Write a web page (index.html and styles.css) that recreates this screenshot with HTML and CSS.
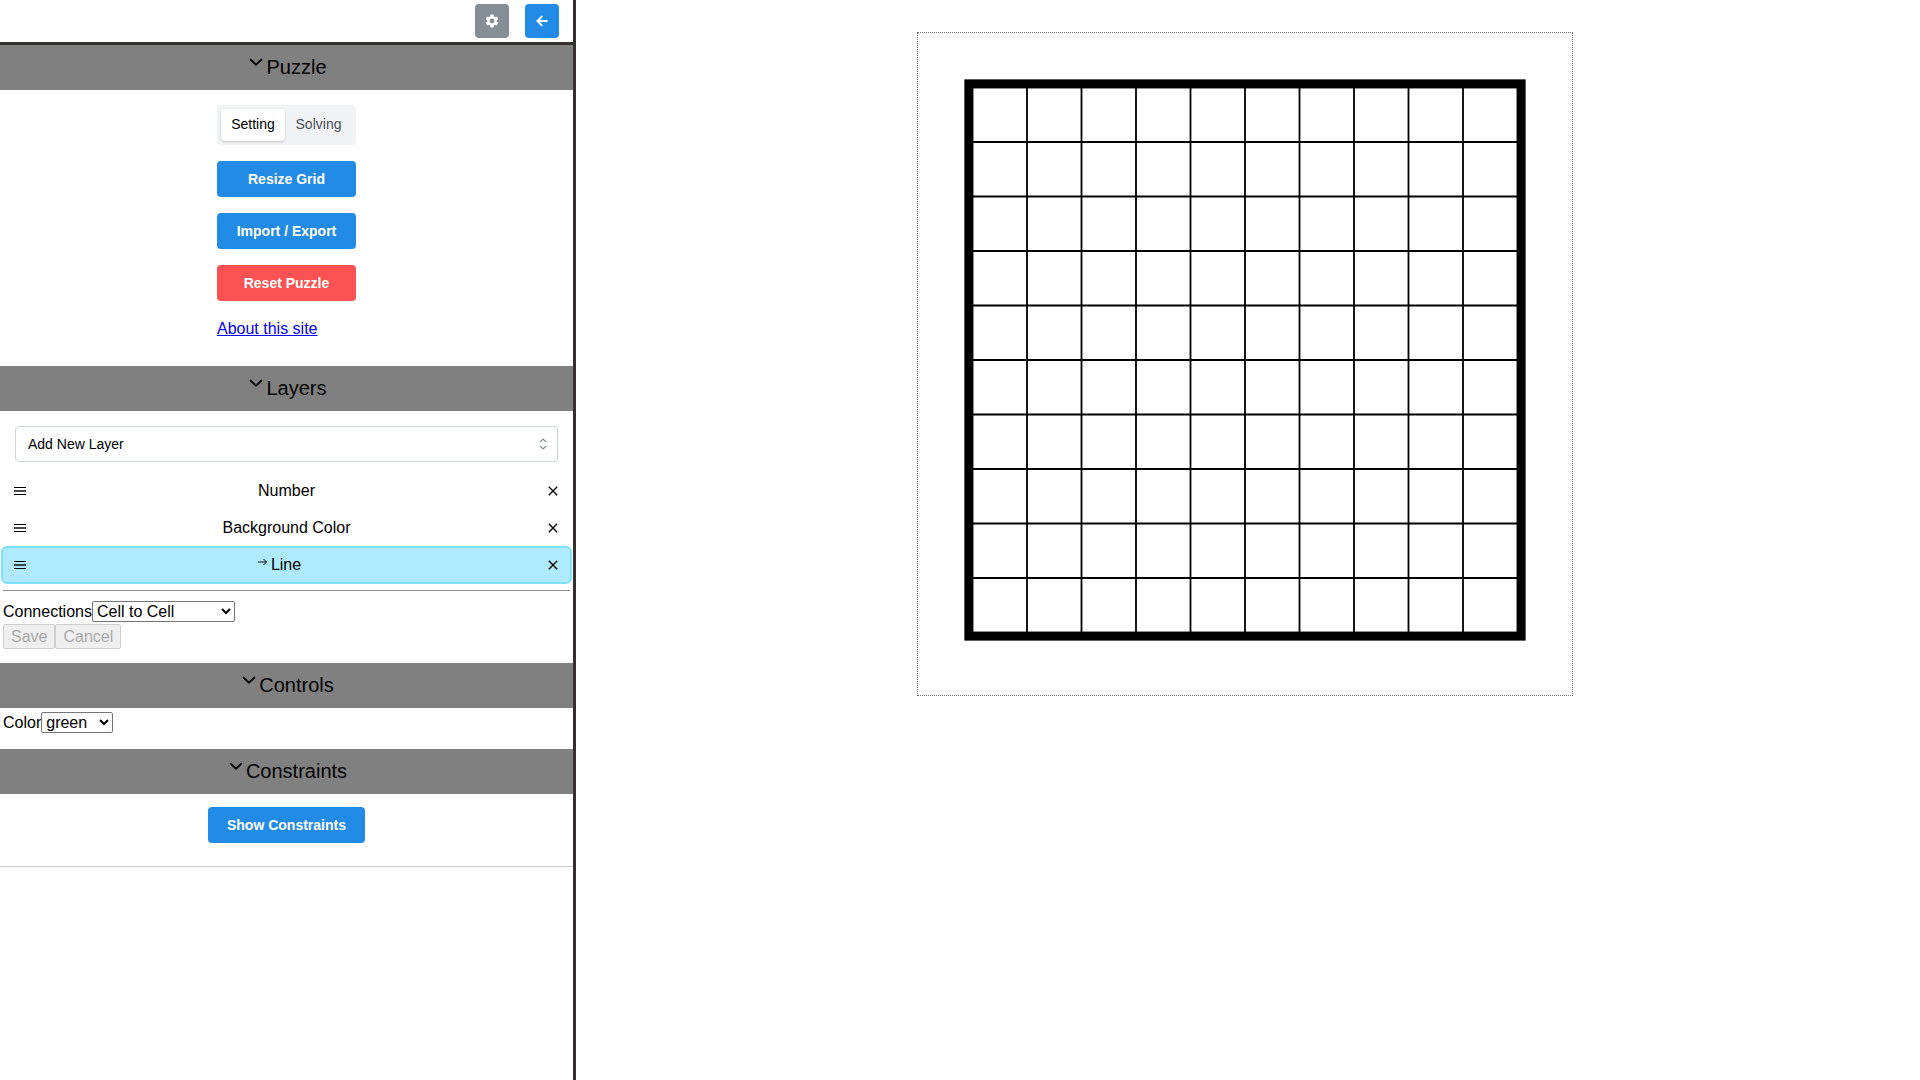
FILE: index.html
```
<!DOCTYPE html>
<html lang="en">
<head>
<meta charset="utf-8">
<title>Puzzle Editor</title>
<link rel="stylesheet" href="styles.css">
</head>
<body>
<svg width="0" height="0" class="defs">
  <symbol id="chevron" viewBox="0 0 15 15"><path d="M3.13523 6.15803C3.3241 5.95657 3.64052 5.94637 3.84197 6.13523L7.5 9.56464L11.158 6.13523C11.3595 5.94637 11.6759 5.95657 11.8648 6.15803C12.0536 6.35949 12.0434 6.67591 11.842 6.86477L7.84197 10.6148C7.64964 10.7951 7.35036 10.7951 7.15803 10.6148L3.15803 6.86477C2.95657 6.67591 2.94637 6.35949 3.13523 6.15803Z"/></symbol>
  <symbol id="close" viewBox="0 0 10 10"><path d="M.8 .8L9.200 9.200M9.200 .8L.8 9.200" fill="none" stroke="#000" stroke-width="1.35"/></symbol>
  <symbol id="handle" viewBox="0 0 12 8"><path d="M0 0h12v1H0zM0 7h12v1H0z"/><path d="M0 3h12v2H0z" opacity=".7"/></symbol>
</svg>
<aside class="sidebar">
  <header class="toolbar">
    <button class="icon-btn gray" aria-label="Settings"><svg width="16" height="16" viewBox="0 0 24 24" fill="#fff"><path d="M19.14 12.94a7.5 7.5 0 0 0 0-1.88l2.03-1.58a.5.5 0 0 0 .12-.61l-1.92-3.32a.5.5 0 0 0-.59-.22l-2.39.96a7 7 0 0 0-1.62-.94l-.36-2.54A.5.5 0 0 0 13.92 2.400h-3.840a.5.5 0 0 0-.48.41l-.36 2.540a7.300 7.300 0 0 0-1.620.940l-2.390-.960a.5.5 0 0 0-.59.220L2.740 8.870a.5.5 0 0 0 .12.610l2.030 1.580a7.500 7.500 0 0 0 0 1.880l-2.030 1.580a.5.5 0 0 0-.12.610l1.920 3.320c.12.220.37.290.59.220l2.390-.960c.5.380 1.030.700 1.620.940l.36 2.540c.05.240.24.410.48.410h3.840c.24 0 .44-.170.47-.410l.36-2.540a7 7 0 0 0 1.620-.940l2.390.960c.22.080.47 0 .59-.220l1.920-3.320a.5.5 0 0 0-.12-.610zM12 15.600a3.600 3.600 0 1 1 0-7.200 3.600 3.600 0 0 1 0 7.200z"/></svg></button>
    <button class="icon-btn" aria-label="Collapse"><svg width="12" height="12" viewBox="0 0 12 12" fill="none" stroke="#fff" stroke-width="1.9"><path d="M11.500 6H2M6.200 1.200L1.400 6l4.800 4.800"/></svg></button>
  </header>

  <h2 class="heading"><svg class="chev"><use href="#chevron"/></svg>Puzzle</h2>
  <section class="puzzle">
    <div class="stack">
      <div class="segmented"><span class="seg active">Setting</span><span class="seg">Solving</span></div>
      <button class="btn">Resize Grid</button>
      <button class="btn">Import / Export</button>
      <button class="btn red">Reset Puzzle</button>
      <a class="about" href="#">About this site</a>
    </div>
  </section>

  <h2 class="heading"><svg class="chev"><use href="#chevron"/></svg>Layers</h2>
  <section class="layers">
    <div class="picker"><span>Add New Layer</span><svg width="8" height="12" viewBox="0 0 8 12" fill="none" stroke="#868e96" stroke-width="1.1"><path d="M1 4l3-3 3 3M1 8l3 3 3-3"/></svg></div>
    <ul class="list">
      <li class="layer"><svg class="handle"><use href="#handle"/></svg><span class="name">Number</span><svg class="close"><use href="#close"/></svg></li>
      <li class="layer"><svg class="handle"><use href="#handle"/></svg><span class="name">Background Color</span><svg class="close"><use href="#close"/></svg></li>
      <li class="layer selected"><svg class="handle"><use href="#handle"/></svg><span class="name"><svg class="arrow" viewBox="0 0 9 8" fill="none" stroke="#000" stroke-width=".95"><path d="M0 4h8.400M5.500 1l3 3-3 3"/></svg>Line</span><svg class="close"><use href="#close"/></svg></li>
    </ul>
    <div class="rule"></div>
    <div class="field"><label for="conn">Connections</label><select id="conn" class="conn"><option>Cell to Cell</option></select></div>
    <div class="actions"><button disabled>Save</button><button disabled>Cancel</button></div>
  </section>

  <h2 class="heading"><svg class="chev"><use href="#chevron"/></svg>Controls</h2>
  <section class="controls">
    <div class="field"><label for="color">Color</label><select id="color" class="color"><option>green</option></select></div>
  </section>

  <h2 class="heading"><svg class="chev"><use href="#chevron"/></svg>Constraints</h2>
  <section class="constraints"><button class="btn">Show Constraints</button></section>
</aside>

<main class="canvas">
  <svg class="board" width="654" height="662" viewBox="0 0 654 662">
    <path d="M109 54.500v545M163.500 54.500v545M218 54.500v545M272.500 54.500v545M327 54.500v545M381.500 54.500v545M436 54.500v545M490.500 54.500v545M545 54.500v545M54.500 109h545M54.500 163.500h545M54.500 218h545M54.500 272.500h545M54.500 327h545M54.500 381.500h545M54.500 436h545M54.500 490.500h545M54.500 545h545" stroke="#000" stroke-width="1.820"/>
    <rect x="50.900" y="50.900" width="552.200" height="552.200" fill="none" stroke="#000" stroke-width="9.080"/>
  </svg>
</main>
</body>
</html>
```
FILE: styles.css
```
* { box-sizing: border-box; }
body {
  margin: 0;
  height: 1080px;
  display: flex;
  overflow: hidden;
  background: #fff;
  color: #000;
  font: 16px/18px "Liberation Sans", Arial, sans-serif;
}
.defs { position: absolute; }
button, select { font-family: inherit; }

.sidebar { width: 576px; flex: none; border-right: 3px solid #352f30; }
.toolbar {
  height: 45px;
  display: flex;
  justify-content: flex-end;
  gap: 16px;
  padding: 4px 14px 0 0;
  border-bottom: 3px solid #352f30;
}
.icon-btn {
  width: 34px;
  height: 34px;
  padding: 0;
  display: flex;
  align-items: center;
  justify-content: center;
  border: 0;
  border-radius: 4px;
  background: #228be6;
}
.icon-btn.gray { background: #868e96; }

.heading {
  height: 45px;
  margin: 0;
  display: flex;
  justify-content: center;
  background: #808080;
  font-size: 20px;
  font-weight: 400;
  line-height: 45px;
}
.chev { width: 20px; height: 20px; margin-top: 6px; stroke: #000; stroke-width: .5; }

.puzzle { height: 276px; padding-top: 15px; display: flex; justify-content: center; }
.stack { width: 139px; display: flex; flex-direction: column; gap: 16px; }
.segmented { height: 40px; padding: 4px; display: flex; border-radius: 4px; background: #f1f3f5; }
.seg {
  flex: 1 1 auto;
  border-radius: 4px;
  font-size: 14px;
  line-height: 31px;
  text-align: center;
  color: #495057;
}
.seg.active { flex: 0 0 64px; background: #fff; color: #000; box-shadow: 0 1px 3px rgba(0,0,0,.1), 0 1px 2px rgba(0,0,0,.1); }
.btn {
  height: 36px;
  padding: 0 18px;
  border: 0;
  border-radius: 4px;
  background: #228be6;
  color: #fff;
  font-size: 14px;
  font-weight: 700;
  white-space: nowrap;
}
.stack .btn { padding: 0; }
.btn.red { background: #fa5252; }
.about { margin-top: 3px; color: #0000ee; }

.layers { height: 252px; padding-top: 15px; }
.picker {
  height: 36px;
  margin: 0 15px 10px;
  padding: 0 10px 0 12px;
  display: flex;
  align-items: center;
  justify-content: space-between;
  border: 1px solid #ced4da;
  border-radius: 4px;
  font-size: 14px;
}
.list { margin: 0; padding: 0 1px; list-style: none; }
.layer {
  height: 37px;
  padding: 0 12px 0 11px;
  display: flex;
  align-items: center;
  justify-content: space-between;
  border: 2px solid transparent;
  border-radius: 6px;
}
.layer.selected { height: 38px; border-color: #7ee0fa; background: #afeaff; }
.name { padding-right: 1px; }
.selected .name { padding-right: 15px; }
.handle { width: 12px; height: 8px; }
.close { width: 10px; height: 10px; }
.arrow { width: 9px; height: 8px; margin-right: 4px; vertical-align: 4px; }
.rule { height: 1px; margin: 6px 3px 10px; background: #8a8a8a; }
.field { display: flex; align-items: center; padding-left: 3px; }
select {
  height: 21px;
  padding: 0;
  border: 1px solid #767676;
  border-radius: 2px;
  background-color: #fff;
  color: #000;
  font-size: 16px;
}
.conn { width: 143px; }
.color { width: 72px; }
.actions { display: flex; padding: 2px 0 0 3px; }
.actions button {
  height: 25px;
  padding: 0 7px;
  border: 1px solid #cfcfcf;
  border-radius: 2px;
  background: #efefef;
  color: #aaa;
  font-size: 16px;
  line-height: 20px;
}
.controls { height: 41px; padding-top: 4px; }
.constraints {
  height: 73px;
  padding-top: 13px;
  display: flex;
  align-items: flex-start;
  justify-content: center;
  border-bottom: 1px solid #ccc;
}
.constraints .btn { width: 157px; }

.canvas { flex: 1; display: flex; align-items: flex-start; padding: 32px 0 0 341px; }
.board { box-sizing: content-box; border: 1px dotted #707070; }
```
